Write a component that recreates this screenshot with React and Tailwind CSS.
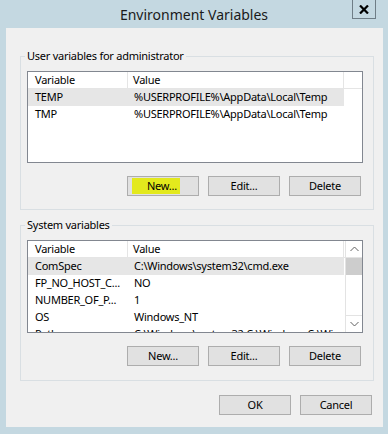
import { useState } from 'react'

const userVars = [
  { name: 'TEMP', value: '%USERPROFILE%\\AppData\\Local\\Temp' },
  { name: 'TMP', value: '%USERPROFILE%\\AppData\\Local\\Temp' },
]

const systemVars = [
  { name: 'ComSpec', value: 'C:\\Windows\\system32\\cmd.exe' },
  { name: 'FP_NO_HOST_C...', value: 'NO' },
  { name: 'NUMBER_OF_P...', value: '1' },
  { name: 'OS', value: 'Windows_NT' },
  { name: 'Path', value: 'C:\\Windows\\system32;C:\\Windows;C:\\Windows\\System32\\Wbem' },
]

function WinButton({ children, highlight }) {
  if (highlight) {
    return (
      <button
        type="button"
        className="flex h-[20px] w-[72px] items-center justify-start border border-[#adadad] bg-[#e1e1e1] pl-[4px] text-black"
      >
        <span className="flex h-[16px] items-center bg-[#e3e91d] pl-[15px] pr-[3px]">{children}</span>
      </button>
    )
  }
  return (
    <button
      type="button"
      className="flex h-[20px] w-[72px] items-center justify-center border border-[#adadad] bg-[#e1e1e1] text-black"
    >
      {children}
    </button>
  )
}

function HeaderRow() {
  return (
    <div className="flex h-[17px] shrink-0 border-b border-[#e5e5e5] leading-[16px]">
      <div className="w-[100px] shrink-0 border-r border-[#e5e5e5] pl-[7px]">Variable</div>
      <div className="w-[216px] shrink-0 border-r border-[#e5e5e5] pl-[5px]">Value</div>
    </div>
  )
}

function VarRow({ row, selected }) {
  return (
    <div className={`flex h-[17px] w-[316px] shrink-0 items-center ${selected ? 'bg-[#e6e6e6]' : ''}`}>
      <div className="w-[100px] shrink-0 overflow-hidden whitespace-nowrap pl-[7px]">{row.name}</div>
      <div className="w-[216px] shrink-0 overflow-hidden whitespace-nowrap pl-[6px]">{row.value}</div>
    </div>
  )
}

function Chevron({ up }) {
  return (
    <svg width="9" height="6" viewBox="0 0 9 6" fill="none" stroke="#606060" strokeWidth="1">
      {up ? <path d="M0.5 5 L4.5 1 L8.5 5" /> : <path d="M0.5 1 L4.5 5 L8.5 1" />}
    </svg>
  )
}

function GroupBox({ label, children, className = '' }) {
  return (
    <div className={`ml-[14px] w-[354px] border border-[#d9dfe3] pl-[6px] ${className}`}>
      <div className="-mt-[9px] ml-[-2px] w-fit bg-[#f0f0f0] px-[2px] leading-[16px]">{label}</div>
      {children}
    </div>
  )
}

export default function App() {
  const [sel] = useState({ user: 0, system: 0 })

  return (
    <div
      className="flex h-[434px] w-[388px] flex-col bg-[#c4d8e1] text-[11px] tracking-[-0.25px] text-black"
      style={{ fontFamily: '"Noto Sans", "Open Sans", sans-serif' }}
    >
      {/* title bar */}
      <div className="relative flex h-[28px] shrink-0 items-center justify-center">
        <span className="pt-[1px] text-[14px] tracking-normal text-[#1a1a1a]">Environment Variables</span>
        <button
          type="button"
          aria-label="Close"
          className="absolute right-[12px] top-[-1px] flex h-[20px] w-[24px] items-center justify-center border border-[#6f7d86]"
        >
          <svg width="10" height="9" viewBox="0 0 10 9" stroke="#000" strokeWidth="2.2">
            <path d="M1 0.5 L9 8.5 M9 0.5 L1 8.5" />
          </svg>
        </button>
      </div>

      {/* client area */}
      <div className="ml-[6px] flex h-[399px] w-[377px] shrink-0 flex-col bg-[#f0f0f0] pt-[28px]">
        <GroupBox label="User variables for administrator" className="pb-[13px]">
          <div className="mt-[7px] flex h-[92px] w-[336px] flex-col border border-[#828790] bg-white">
            <HeaderRow />
            {userVars.map((r, i) => (
              <VarRow key={r.name} row={r} selected={i === sel.user} />
            ))}
          </div>
          <div className="mt-[13px] flex w-[336px] justify-end gap-[9px] pr-[2px]">
            <WinButton highlight>New...</WinButton>
            <WinButton>Edit...</WinButton>
            <WinButton>Delete</WinButton>
          </div>
        </GroupBox>

        <GroupBox label="System variables" className="mt-[15px] pb-[14px]">
          <div className="mt-[7px] flex h-[93px] w-[336px] border border-[#828790] bg-white">
            <div className="flex min-w-0 flex-1 flex-col overflow-hidden">
              <HeaderRow />
              {systemVars.map((r, i) => (
                <VarRow key={r.name} row={r} selected={i === sel.system} />
              ))}
            </div>
            <div className="flex w-[17px] shrink-0 flex-col border-l border-[#e3e3e3] bg-[#f7f7f7]">
              <div className="flex h-[17px] items-center justify-center border-b border-[#e3e3e3] bg-white">
                <Chevron up />
              </div>
              <div className="h-[17px] bg-[#cdcdcd]" />
              <div className="flex-1 bg-white" />
              <div className="flex h-[17px] items-center justify-center border-t border-[#e3e3e3] bg-white">
                <Chevron />
              </div>
            </div>
          </div>
          <div className="mt-[13px] flex w-[336px] justify-end gap-[9px] pr-[2px]">
            <WinButton>New...</WinButton>
            <WinButton>Edit...</WinButton>
            <WinButton>Delete</WinButton>
          </div>
        </GroupBox>

        <div className="mt-[14px] flex justify-end gap-[9px] pr-[11px]">
          <WinButton>OK</WinButton>
          <WinButton>Cancel</WinButton>
        </div>
      </div>
    </div>
  )
}
